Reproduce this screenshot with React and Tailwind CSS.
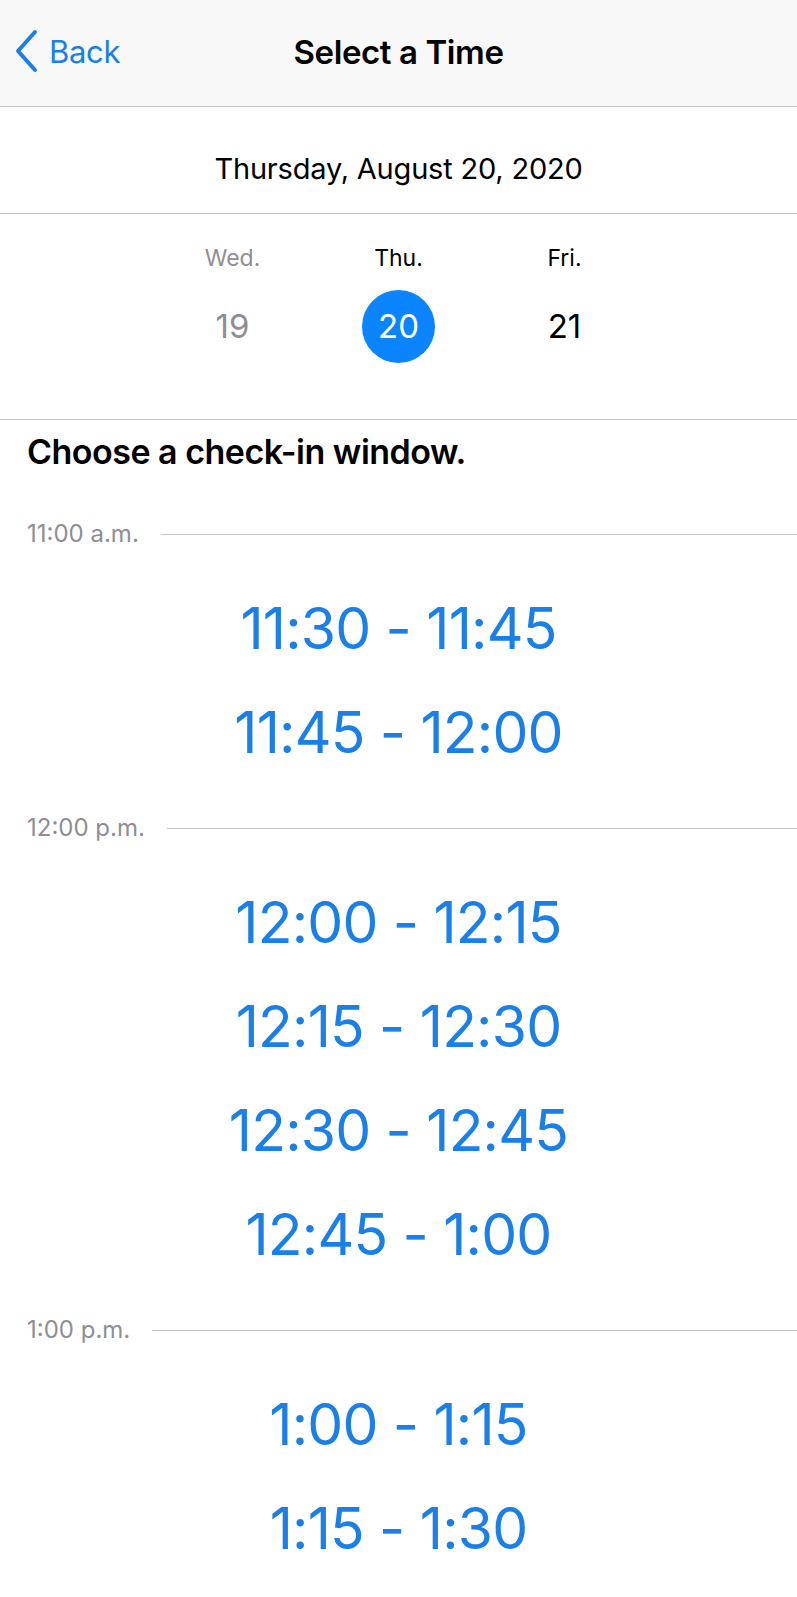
import React from 'react';

const days = [
  { label: 'Wed.', num: '19', muted: true },
  { label: 'Thu.', num: '20', selected: true },
  { label: 'Fri.', num: '21' },
];

const groups = [
  { hour: '11:00 a.m.', slots: ['11:30 - 11:45', '11:45 - 12:00'] },
  { hour: '12:00 p.m.', slots: ['12:00 - 12:15', '12:15 - 12:30', '12:30 - 12:45', '12:45 - 1:00'] },
  { hour: '1:00 p.m.', slots: ['1:00 - 1:15', '1:15 - 1:30'] },
];

export default function App() {
  return (
    <div className="w-[797px] h-[1597px] overflow-hidden bg-white font-['Inter','Liberation_Sans',sans-serif]">
      {/* Nav bar */}
      <div className="relative h-[107px] bg-[#f8f8f8] border-b border-[#c6c6c8] flex items-center justify-center">
        <button className="absolute left-[13px] top-[29px] flex items-center gap-[10px] text-[#1a7fe6]">
          <svg width="26" height="44" viewBox="0 0 26 44" fill="none">
            <path d="M22 3 L5 22 L22 41" stroke="#1a7fe6" strokeWidth="4" strokeLinecap="round" strokeLinejoin="round" />
          </svg>
          <span className="text-[31px] leading-none tracking-[-0.3px]">Back</span>
        </button>
        <h1 className="text-[33px] font-semibold text-black tracking-[-0.4px]">Select a Time</h1>
      </div>

      {/* Date */}
      <div className="h-[107px] pt-[18px] border-b border-[#c6c6c8] flex items-center justify-center">
        <span className="text-[29px] text-black tracking-[-0.2px]">Thursday, August 20, 2020</span>
      </div>

      {/* Day picker */}
      <div className="h-[206px] border-b border-[#c6c6c8] flex justify-center gap-[93px] pt-[29px]">
        {days.map((d) => (
          <div key={d.num} className="w-[73px] flex flex-col items-center">
            <span className={`text-[23px] leading-[30px] ${d.muted ? 'text-[#8e8e93]' : 'text-black'}`}>{d.label}</span>
            <span
              className={`mt-[17px] w-[73px] h-[73px] rounded-full flex items-center justify-center text-[33px] ${
                d.selected ? 'bg-[#0a84ff] text-white' : d.muted ? 'text-[#8e8e93]' : 'text-black'
              }`}
            >
              {d.num}
            </span>
          </div>
        ))}
      </div>

      {/* Slots */}
      <div className="px-[27px] pt-[14px]">
        <h2 className="text-[34px] font-semibold text-black tracking-[-0.5px] leading-[36px]">Choose a check-in window.</h2>
        <div className="mt-[49px]">
          {groups.map((g) => (
            <div key={g.hour} className="mb-[28px]">
              <div className="flex items-center gap-[22px] -mr-[27px] h-[30px]">
                <span className="text-[24px] text-[#8e8e93] whitespace-nowrap">{g.hour}</span>
                <div className="flex-1 h-px bg-[#c6c6c8]" />
              </div>
              <div className="pt-[28px] -mx-[27px]">
                {g.slots.map((s) => (
                  <div key={s} className="h-[104px] flex items-center justify-center">
                    <span className="text-[57px] text-[#1a7fe6] tracking-[-0.8px]">{s}</span>
                  </div>
                ))}
              </div>
            </div>
          ))}
        </div>
      </div>
    </div>
  );
}
